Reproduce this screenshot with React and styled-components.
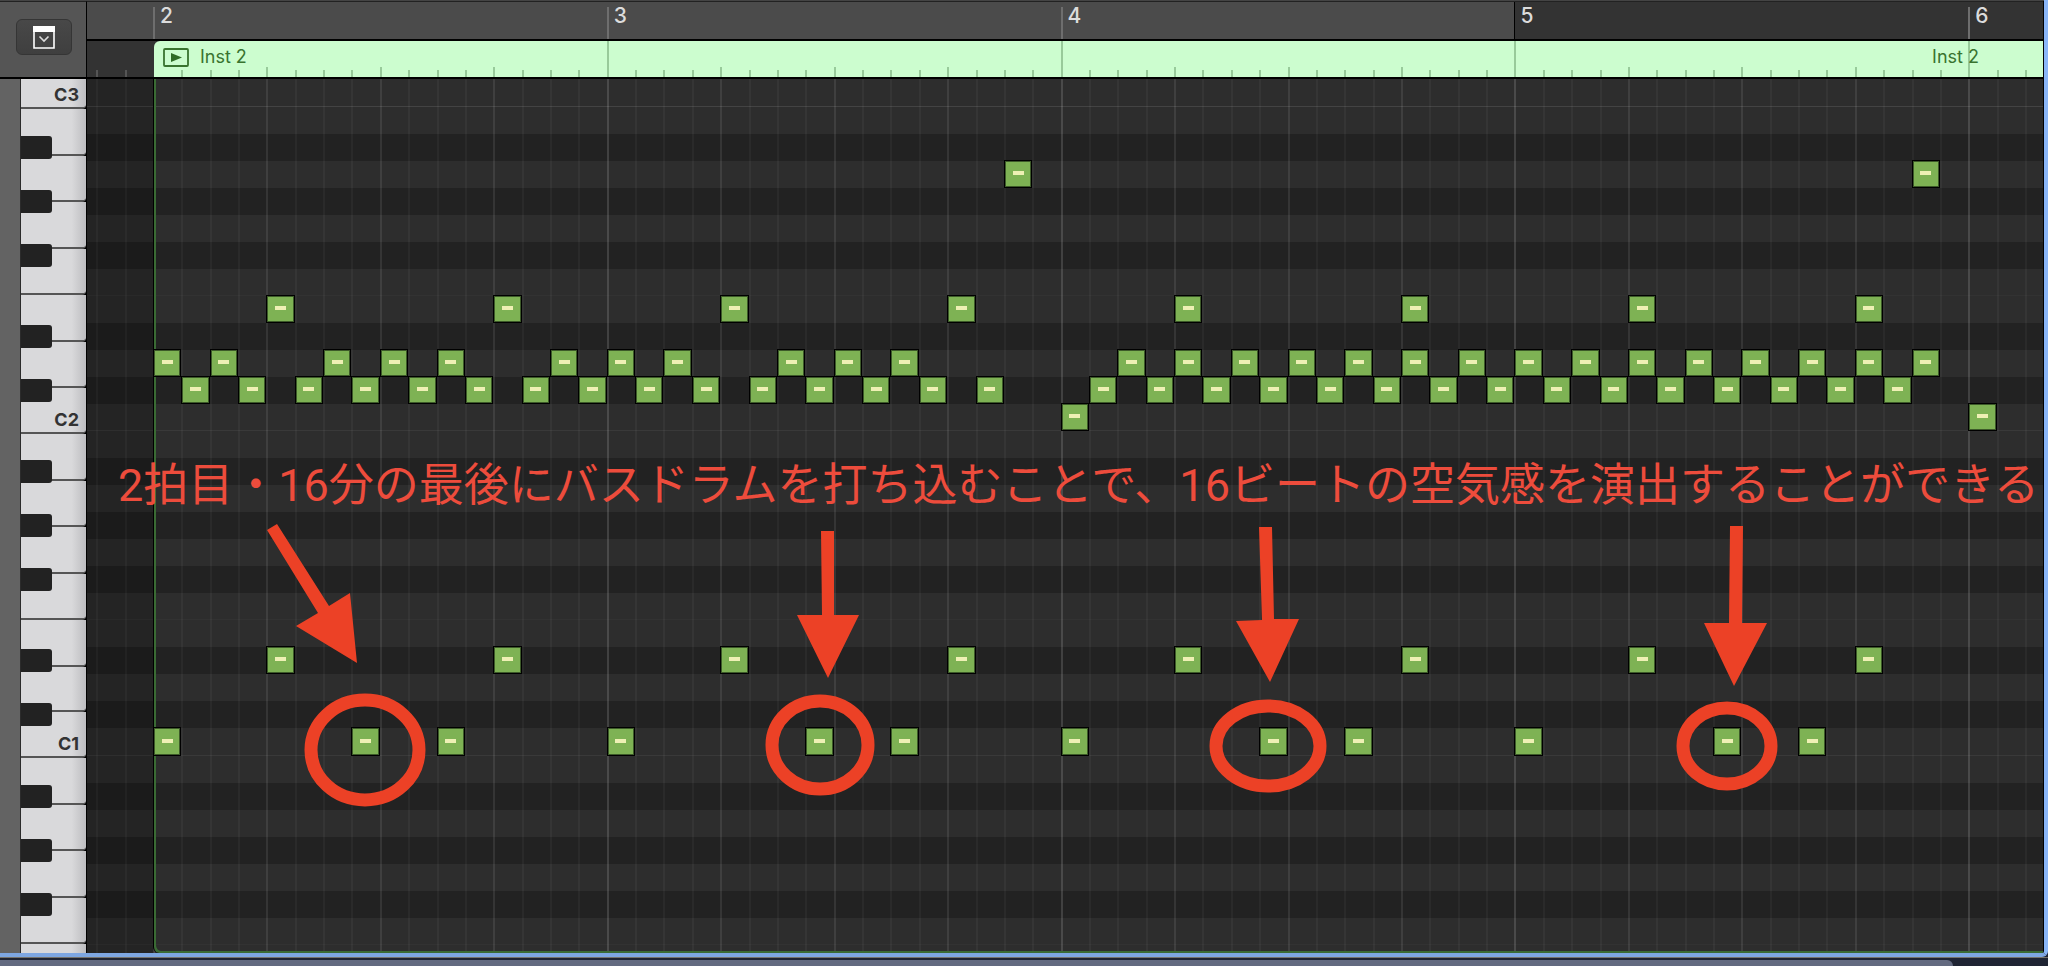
import React from "react";
import styled, { createGlobalStyle } from "styled-components";

const GlobalStyle = createGlobalStyle`
  * {
    box-sizing: border-box;
  }
  body {
    margin: 0;
    background: #1f2433;
    font-family: Inter, "Liberation Sans", sans-serif;
  }
`;

/* every strip of the timeline shares the same sixteenth-note columns */
const columns = "minmax(0, 9fr) repeat(68, minmax(0, 25fr)) minmax(0, 15fr)";
const stepColumn = step => step + 4;

const Desktop = styled.div`
  position: relative;
  display: flex;
  flex-direction: column;
  height: 100vh;
  overflow: hidden;
`;

const EditorWindow = styled.main`
  display: flex;
  flex: 1;
  flex-direction: column;
  min-height: 0;
  background: #000;
  border-right: 4px solid #8ab6f8;
  border-bottom: 4px solid #7ea7e2;
  border-bottom-right-radius: 6px;
  overflow: hidden;
`;

const Header = styled.header`
  display: flex;
  height: 79px;
  border-top: 1px solid #444;
  border-bottom: 2px solid #000;
  padding-right: 1px;
`;

const Corner = styled.div`
  display: flex;
  width: 87px;
  padding: 17px 14px 0 16px;
  background: #555;
  border-top: 1px solid #222;
  border-right: 1px solid #000;
`;

const MenuButton = styled.button`
  display: flex;
  align-items: center;
  justify-content: center;
  width: 56px;
  height: 36px;
  padding: 0;
  background: linear-gradient(#484848, #3f3f3f);
  border: 1px solid #353535;
  border-radius: 6px;
`;

const Timeline = styled.div`
  display: flex;
  flex: 1;
  flex-direction: column;
  min-width: 0;
`;

const Ruler = styled.div`
  display: grid;
  grid-template-columns: ${columns};
  grid-template-rows: minmax(0, 1fr);
  height: 40px;
  background: #333;
  border-top: 1px solid #222;
  border-bottom: 2px solid #000;
`;

const CycleRange = styled.div`
  grid-row: 1;
  grid-column: 1 / ${stepColumn(48)};
  background: #4b4b4b;
  border-right: 1px solid #000;
`;

const BarMark = styled.div`
  grid-row: 1;
  grid-column-start: ${props => stepColumn(props.$step)};
  margin: ${props => (props.$cut ? "0" : "5px")} 0 0 -1px;
  padding: ${props => (props.$cut ? "5px" : "0")} 0 0 5px;
  border-left: ${props => (props.$cut ? "1px solid #000" : "2px solid #6e6e6e")};
  color: #dcdcdc;
  font-size: 21px;
  font-weight: 500;
  line-height: 18px;
  white-space: nowrap;
`;

const RegionLane = styled.div`
  display: grid;
  grid-template-columns: ${columns};
  grid-template-rows: minmax(0, 1fr);
  flex: 1;
  background: #333;
`;

const Region = styled.div`
  display: flex;
  grid-row: 1;
  grid-column: 4 / -1;
  align-items: center;
  gap: 11px;
  padding: 0 64px 4px 9px;
  background: #ccfdcf;
  border-top-left-radius: 6px;
  color: #39732f;
  font-size: 18px;
  line-height: 20px;
  white-space: nowrap;
`;

const RegionEndName = styled.span`
  margin-left: auto;
`;

const tickHeights = { bar: "100%", beat: "10px", step: "7px" };

const Tick = styled.div`
  grid-row: 1;
  grid-column-start: ${props => stepColumn(props.$step)};
  align-self: end;
  height: ${props => tickHeights[props.$kind]};
  margin-left: -1px;
  border-left: 2px solid ${props => (props.$step < 0 ? "#555" : "rgba(60, 110, 60, 0.36)")};
`;

const Body = styled.div`
  display: flex;
  flex: 1;
  min-height: 0;
  padding-right: 1px;
`;

const Gutter = styled.div`
  width: 21px;
  background: #636363;
  border-right: 1px solid #2b2b2b;
`;

const Keyboard = styled.div`
  display: grid;
  grid-template-columns: 65px;
  grid-template-rows: minmax(0, 1fr);
  width: 66px;
  border-right: 1px solid #000;
  overflow: hidden;
`;

const WhiteKeys = styled.div`
  display: flex;
  grid-area: 1 / 1;
  flex-direction: column;
  overflow: hidden;
`;

const WhiteKey = styled.div`
  display: flex;
  flex: 0 0 ${props => props.$height}px;
  align-items: flex-end;
  justify-content: flex-end;
  padding-right: 7px;
  background: linear-gradient(to right, #d9d9db 78%, #bdbdc0);
  border-bottom: 2px solid #555;
  border-bottom-right-radius: 4px;
  color: #333;
  font-size: 18px;
  font-weight: 700;
  line-height: 24px;
`;

const BlackKeys = styled.div`
  display: flex;
  grid-area: 1 / 1;
  flex-direction: column;
  padding-top: 28px;
  overflow: hidden;
`;

const KeySlot = styled.div`
  flex: 0 0 ${props => props.$height}px;
  padding: 2px 0;
`;

const BlackKey = styled.div`
  width: 31px;
  height: 23px;
  background: #222;
  border-radius: 0 3px 3px 0;
`;

const Roll = styled.div`
  display: grid;
  grid-template-columns: ${columns};
  grid-template-rows: 28px repeat(23, 27px) 28px repeat(7, 27px) minmax(0, 1fr);
  flex: 1;
  min-width: 0;
  overflow: hidden;
`;

const Lane = styled.div`
  grid-row: ${props => props.$row};
  grid-column: 1 / -1;
  background: ${props => (props.$black ? "#222" : "#2d2d2d")};
  border-bottom: ${props => (props.$edge ? `1px solid ${props.$edge}` : "0")};
`;

const lineColors = {
  bar: "rgba(255, 255, 255, 0.14)",
  beat: "rgba(255, 255, 255, 0.09)",
  step: "rgba(255, 255, 255, 0.04)",
};

const GridLine = styled.div`
  grid-row: 1 / -1;
  grid-column-start: ${props => stepColumn(props.$step)};
  margin-left: -1px;
  border-left: 2px solid ${props => lineColors[props.$kind]};
`;

const BeforeRegion = styled.div`
  grid-row: 1 / -1;
  grid-column: 1 / 4;
  background: rgba(0, 0, 0, 0.18);
`;

const RegionFrame = styled.div`
  grid-row: 1 / -1;
  grid-column: 4 / -1;
  margin-left: -1px;
  border-left: 1px solid #000;
  border-bottom-left-radius: 6px;
  box-shadow: inset 2px -2px 0 #3a6b34;
`;

const Note = styled.div`
  display: flex;
  grid-row: ${props => props.$row};
  grid-column-start: ${props => stepColumn(props.$step)};
  align-items: center;
  justify-content: center;
  margin: -1px 1px 0 -1px;
  background: #7eb254;
  border: 1px solid #000;
  box-shadow: inset 0 0 0 1px #3d5a29;
`;

const Velocity = styled.div`
  width: 11px;
  height: 4px;
  margin-bottom: 2px;
  background: #eef0b4;
`;

const DockEdge = styled.div`
  height: 9px;
  padding: 2px 95px 0 0;
  background: #1f2433;
  border-top: 1px solid #77746c;
`;

const Dock = styled.div`
  height: 8px;
  background: #636a80;
  border-top-right-radius: 6px;
`;

const Markup = styled.svg`
  position: absolute;
  inset: 0;
  width: 100%;
  height: 100%;
  pointer-events: none;
`;

const Caption = styled.p`
  position: absolute;
  top: 456px;
  left: 118px;
  margin: 0;
  color: #ed4c3c;
  font-family: Roboto, "Noto Sans CJK JP", sans-serif;
  font-size: 45px;
  font-weight: 400;
  line-height: 60px;
  white-space: nowrap;
`;

const bars = [
  { name: 2, step: 0 },
  { name: 3, step: 16 },
  { name: 4, step: 32 },
  { name: 5, step: 48 },
  { name: 6, step: 64 },
];

const steps = Array.from({ length: 69 }, (_, i) => i - 2);

const lineKind = step => {
  if (step % 16 === 0) return "bar";
  if (step % 4 === 0) return "beat";
  return "step";
};

/* pitches from the top lane down: C3, then B to C for each octave */
const octave = ["B", "A#", "A", "G#", "G", "F#", "F", "E", "D#", "D", "C#", "C"];
const lanes = ["C", ...octave, ...octave, ...octave.slice(0, 8)];
const isBlack = pitch => pitch.includes("#");

const laneEdge = (pitch, row) => {
  if (row === 1) return "#434343";
  if (pitch === "C") return "#393939";
  if (pitch === "F") return "#323232";
  return null;
};

const whiteKeys = [
  { height: 30, label: "C3" },
  { height: 47 },
  { height: 46 },
  { height: 47 },
  { height: 46 },
  { height: 47 },
  { height: 46 },
  { height: 46, label: "C2" },
  { height: 47 },
  { height: 46 },
  { height: 47 },
  { height: 46 },
  { height: 47 },
  { height: 45 },
  { height: 46, label: "C1" },
  { height: 47 },
  { height: 46 },
  { height: 47 },
  { height: 46 },
  { height: 47 },
];

const range = (from, to, by) => {
  const list = [];
  for (let i = from; i <= to; i += by) list.push(i);
  return list;
};

const notes = [
  { row: 4, steps: [30, 62] },
  { row: 9, steps: range(4, 60, 8) },
  { row: 11, steps: [0, 2, 6, 8, 10, 14, 16, 18, 22, 24, 26, ...range(34, 62, 2)] },
  { row: 12, steps: [...range(1, 29, 2), ...range(33, 61, 2)] },
  { row: 13, steps: [32, 64] },
  { row: 22, steps: range(4, 60, 8) },
  { row: 25, steps: [0, 7, 10, 16, 23, 26, 32, 39, 42, 48, 55, 58] },
];

const arrows = [
  "267,530 277,524 329,606 350,593 357,663 296,626 318,613",
  "821,531 834,531 834,615 859,615 828,678 797,615 822,615",
  "1259,527 1272,527 1274,619 1299,619 1270,682 1236,621 1262,620",
  "1730,526 1743,526 1742,623 1767,623 1734,686 1704,623 1729,623",
];

const rings = [
  { cx: 365, cy: 750, rx: 54, ry: 50 },
  { cx: 820, cy: 745, rx: 48, ry: 44 },
  { cx: 1268, cy: 746, rx: 52, ry: 40 },
  { cx: 1727, cy: 746, rx: 44, ry: 38 },
];

const MenuIcon = () => (
  <svg width="22" height="23" viewBox="0 0 22 23" fill="none">
    <path d="M1 1h20v21H1z" stroke="#fff" strokeWidth="1.6" />
    <path d="M0 0h22v6H0z" fill="#fff" />
    <path d="M6.5 10.5l4.5 4.5 4.5-4.5" stroke="#ddd" strokeWidth="1.6" />
  </svg>
);

const PlayIcon = () => (
  <svg width="26" height="19" viewBox="0 0 26 19">
    <rect x="1" y="1" width="24" height="17" rx="1" fill="none" stroke="#39732f" strokeWidth="1.8" />
    <path d="M8 5l11 4.5L8 14z" fill="#2f6b26" />
  </svg>
);

class App extends React.Component {
  render() {
    return (
      <Desktop>
        <GlobalStyle />
        <EditorWindow>
          <Header>
            <Corner>
              <MenuButton type="button" aria-label="Editor menu">
                <MenuIcon />
              </MenuButton>
            </Corner>
            <Timeline>
              <Ruler>
                <CycleRange />
                {bars.map(bar => (
                  <BarMark key={bar.name} $step={bar.step} $cut={bar.step === 48}>
                    {bar.name}
                  </BarMark>
                ))}
              </Ruler>
              <RegionLane>
                <Region>
                  <PlayIcon />
                  <span>Inst 2</span>
                  <RegionEndName>Inst 2</RegionEndName>
                </Region>
                {steps.filter(step => step !== 0).map(step => (
                  <Tick key={step} $step={step} $kind={lineKind(step)} />
                ))}
              </RegionLane>
            </Timeline>
          </Header>
          <Body>
            <Gutter />
            <Keyboard>
              <WhiteKeys>
                {whiteKeys.map((key, i) => (
                  <WhiteKey key={i} $height={key.height}>{key.label}</WhiteKey>
                ))}
              </WhiteKeys>
              <BlackKeys>
                {lanes.slice(1).map((pitch, i) => (
                  <KeySlot key={i} $height={i === 23 ? 28 : 27}>
                    {isBlack(pitch) && <BlackKey />}
                  </KeySlot>
                ))}
              </BlackKeys>
            </Keyboard>
            <Roll>
              {lanes.map((pitch, i) => (
                <Lane
                  key={i}
                  $row={i + 1}
                  $black={isBlack(pitch)}
                  $edge={laneEdge(pitch, i + 1)}
                />
              ))}
              {steps.map(step => (
                <GridLine key={step} $step={step} $kind={lineKind(step)} />
              ))}
              <BeforeRegion />
              <RegionFrame />
              {notes.map(line =>
                line.steps.map(step => (
                  <Note key={`${line.row}-${step}`} $row={line.row} $step={step}>
                    <Velocity />
                  </Note>
                ))
              )}
            </Roll>
          </Body>
        </EditorWindow>
        <DockEdge>
          <Dock />
        </DockEdge>
        <Caption>
          2拍目・16分の最後にバスドラムを打ち込むことで、16ビートの空気感を演出することができる
        </Caption>
        <Markup viewBox="0 0 2048 966" preserveAspectRatio="none">
          {arrows.map(points => (
            <polygon key={points} points={points} fill="#ec4126" />
          ))}
          {rings.map(ring => (
            <ellipse key={ring.cx} {...ring} fill="none" stroke="#ec4126" strokeWidth="13" />
          ))}
        </Markup>
      </Desktop>
    );
  }
}

export default App;
